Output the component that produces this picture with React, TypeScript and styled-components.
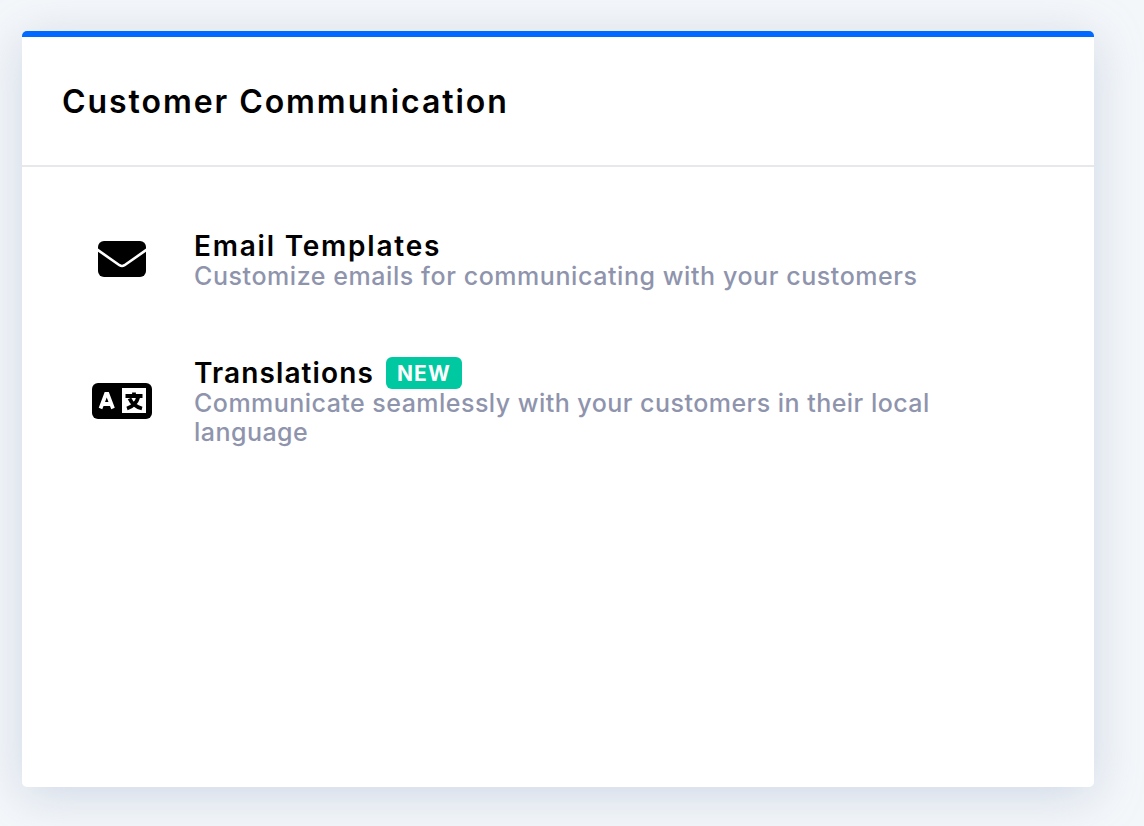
import React from "react";
import styled, { createGlobalStyle } from "styled-components";

const Global = createGlobalStyle`
  html, body { margin: 0; padding: 0; height: 100%; }
  body { background: #f4f7fa; font-family: "Inter", "Liberation Sans", sans-serif; overflow: hidden; }
`;

const Page = styled.div`
  width: 1144px;
  height: 826px;
  box-sizing: border-box;
  padding: 31px 50px 39px 22px;
  overflow: hidden;
`;

const Card = styled.section`
  height: 750px;
  background: #fff;
  border-top: 6px solid #0069ff;
  border-radius: 5px;
  box-shadow: 0 8px 48px rgba(140, 160, 190, 0.36);
`;

const Header = styled.header`
  height: 130px;
  box-sizing: border-box;
  border-bottom: 2px solid #e6e8ec;
  padding: 0 40px;
  display: flex;
  align-items: center;
`;

const Title = styled.h1`
  margin: 2px 0 0;
  font-size: 32px;
  line-height: 38px;
  font-weight: 600;
  color: #000;
  letter-spacing: 1.94px;
`;

const List = styled.div`
  display: flex;
  flex-direction: column;
  gap: 66px;
  padding: 64px 130px 0 68px;
`;

const Row = styled.div`
  display: flex;
  align-items: flex-start;
`;

const IconSlot = styled.div<{ $top: number }>`
  width: 64px;
  margin-right: 40px;
  padding-top: ${(p) => p.$top}px;
  display: flex;
  justify-content: center;
  flex: none;
`;

const Body = styled.div`
  min-width: 0;
`;

const NameLine = styled.div`
  display: flex;
  align-items: center;
  gap: 12px;
`;

const Name = styled.h2<{ $tracking: number }>`
  margin: 0;
  font-size: 28px;
  line-height: 31px;
  font-weight: 600;
  color: #000;
  letter-spacing: ${(p) => p.$tracking}px;
`;

const Badge = styled.span`
  width: 76px;
  height: 32px;
  border-radius: 6px;
  background: #00c9a1;
  color: #fff;
  font-size: 21px;
  font-weight: 700;
  letter-spacing: 1.2px;
  display: flex;
  align-items: center;
  justify-content: center;
`;

const Description = styled.p<{ $tracking: number }>`
  margin: 0;
  font-size: 25px;
  line-height: 29px;
  font-weight: 500;
  color: #8f94ad;
  letter-spacing: ${(p) => p.$tracking}px;
`;

const MailIcon = () => (
  <svg width="48" height="36" viewBox="0 0 48 36" aria-hidden="true">
    <rect width="48" height="36" rx="6" fill="#000" />
    <path d="M-1 8.5 L21.5 24.2 Q24 25.8 26.5 24.2 L49 8.5" fill="none" stroke="#fff" strokeWidth="2.6" />
  </svg>
);

const TranslateIcon = () => (
  <svg width="60" height="36" viewBox="0 0 60 36" aria-hidden="true">
    <rect width="60" height="36" rx="6" fill="#000" />
    <path d="M8.5 25.5 L14 11 h1.5 L21 25.5 M11 21 h8" fill="none" stroke="#fff" strokeWidth="3.8" />
    <rect x="30" y="5" width="24" height="25" fill="#fff" />
    <path d="M33.5 13 h17 M42 9.5 v4 M46.5 13.5 C45 19 41 23.5 35 25.5 M37.5 15.5 C39.5 20 44 24 50 25.5" fill="none" stroke="#000" strokeWidth="3.8" />
  </svg>
);

export default function App() {
  return (
    <>
      <Global />
      <Page>
        <Card>
          <Header>
            <Title>Customer Communication</Title>
          </Header>
          <List>
            <Row>
              <IconSlot $top={10}>
                <MailIcon />
              </IconSlot>
              <Body>
                <NameLine>
                  <Name $tracking={1.78}>Email Templates</Name>
                </NameLine>
                <Description $tracking={0.57}>Customize emails for communicating with your customers</Description>
              </Body>
            </Row>
            <Row>
              <IconSlot $top={26}>
                <TranslateIcon />
              </IconSlot>
              <Body>
                <NameLine>
                  <Name $tracking={1.12}>Translations</Name>
                  <Badge>NEW</Badge>
                </NameLine>
                <Description $tracking={0.47}>Communicate seamlessly with your customers in their local language</Description>
              </Body>
            </Row>
          </List>
        </Card>
      </Page>
    </>
  );
}
